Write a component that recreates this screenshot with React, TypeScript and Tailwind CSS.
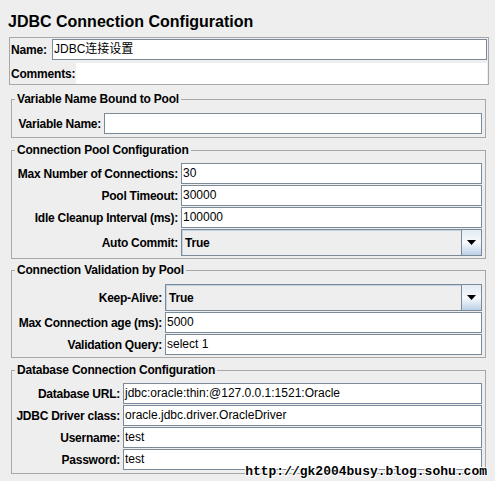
import React from 'react';

type Kids = { children?: React.ReactNode };

const Field = ({ value = '' }: { value?: string }) => (
  <div className="flex-1 min-w-0 h-[21px] bg-white border border-[#7a8a99] pl-[1px] text-[12px] leading-[19px] whitespace-nowrap overflow-hidden">
    {value}
  </div>
);

const Combo = ({ value }: { value: string }) => (
  <div className="flex-1 min-w-0 h-[27px] flex border border-[#7a8a99] bg-[#eeeeee]">
    <div className="flex-1 flex items-center pl-[2px] text-[12px] font-bold tracking-[-0.2px] border-l border-t border-[#c3d3e3]">
      {value}
    </div>
    <div className="w-[20px] flex items-center justify-center border-l border-[#7a8a99] bg-gradient-to-b from-[#e3ebf3] via-[#f7f9fc] to-[#bcd1e6]">
      <svg width="9" height="5" viewBox="0 0 9 5">
        <path d="M0 0H9L4.5 5Z" fill="#000" />
      </svg>
    </div>
  </div>
);

const Row = ({ label, labelCls, children }: Kids & { label: string; labelCls: string }) => (
  <div className="flex items-center">
    <span className={`shrink-0 text-right pr-[3px] text-[12px] font-bold tracking-[-0.25px] whitespace-nowrap ${labelCls}`}>{label}</span>
    {children}
  </div>
);

const Group = ({ title, className, children }: Kids & { title: string; className: string }) => (
  <fieldset className={`ml-[11px] w-[475px] border border-[#a8a8a8] pl-[3px] pr-[3px] ${className}`}>
    <legend className="px-[2px] text-[12px] leading-[14px] font-bold tracking-[-0.2px]">{title}</legend>
    {children}
  </fieldset>
);

export default function App() {
  return (
    <div className="relative w-[495px] h-[481px] overflow-hidden bg-[#eeeeee] text-black font-['Liberation_Sans','Noto_Sans_CJK_SC',sans-serif]">
      {/* Title */}
      <div className="ml-[8px] mt-[12px] h-[19px] text-[16px] leading-[19px] font-bold">JDBC Connection Configuration</div>

      {/* Name / Comments */}
      <div className="ml-[9px] mt-[6px] w-[480px] border border-[#a8a8a8] px-[1px] pt-[1px]">
        <div className="flex items-center h-[21px]">
          <span className="shrink-0 w-[41px] text-[12px] font-bold tracking-[-0.2px]">Name:</span>
          <Field value="JDBC连接设置" />
        </div>
        <div className="flex items-center h-[21px] mt-[3px]">
          <span className="shrink-0 w-[65px] text-[12px] font-bold tracking-[-0.2px]">Comments:</span>
          <div className="flex-1 h-full bg-white" />
        </div>
      </div>

      <Group title="Variable Name Bound to Pool" className="mt-[7px] pt-[7px] pb-[3px]">
        <Row label="Variable Name:" labelCls="w-[89px]">
          <Field />
        </Row>
      </Group>

      <Group title="Connection Pool Configuration" className="mt-[5px] pt-[6px] pb-[2px]">
        <div className="flex flex-col gap-[1px]">
          <Row label="Max Number of Connections:" labelCls="w-[166px]">
            <Field value="30" />
          </Row>
          <Row label="Pool Timeout:" labelCls="w-[166px]">
            <Field value="30000" />
          </Row>
          <Row label="Idle Cleanup Interval (ms):" labelCls="w-[166px]">
            <Field value="100000" />
          </Row>
          <Row label="Auto Commit:" labelCls="w-[166px]">
            <Combo value="True" />
          </Row>
        </div>
      </Group>

      <Group title="Connection Validation by Pool" className="mt-[4px] pt-[7px] pb-[2px]">
        <div className="flex flex-col gap-[1px]">
          <Row label="Keep-Alive:" labelCls="w-[150px]">
            <Combo value="True" />
          </Row>
          <Row label="Max Connection age (ms):" labelCls="w-[150px]">
            <Field value="5000" />
          </Row>
          <Row label="Validation Query:" labelCls="w-[150px]">
            <Field value="select 1" />
          </Row>
        </div>
      </Group>

      <Group title="Database Connection Configuration" className="mt-[5px] pt-[6px] pb-[3px]">
        <div className="flex flex-col gap-[1px]">
          <Row label="Database URL:" labelCls="w-[108px]">
            <Field value="jdbc:oracle:thin:@127.0.0.1:1521:Oracle" />
          </Row>
          <Row label="JDBC Driver class:" labelCls="w-[108px]">
            <Field value="oracle.jdbc.driver.OracleDriver" />
          </Row>
          <Row label="Username:" labelCls="w-[108px]">
            <Field value="test" />
          </Row>
          <Row label="Password:" labelCls="w-[108px]">
            <Field value="test" />
          </Row>
        </div>
      </Group>

      {/* watermark */}
      <div className="absolute right-[8px] bottom-[1px] font-['Liberation_Mono',monospace] font-bold text-[13px] leading-[16px] text-black [text-shadow:1px_0_0_#fff,-1px_0_0_#fff,0_1px_0_#fff,0_-1px_0_#fff,1px_1px_0_#fff,-1px_-1px_0_#fff]">
        http://gk2004busy.blog.sohu.com
      </div>
    </div>
  );
}
